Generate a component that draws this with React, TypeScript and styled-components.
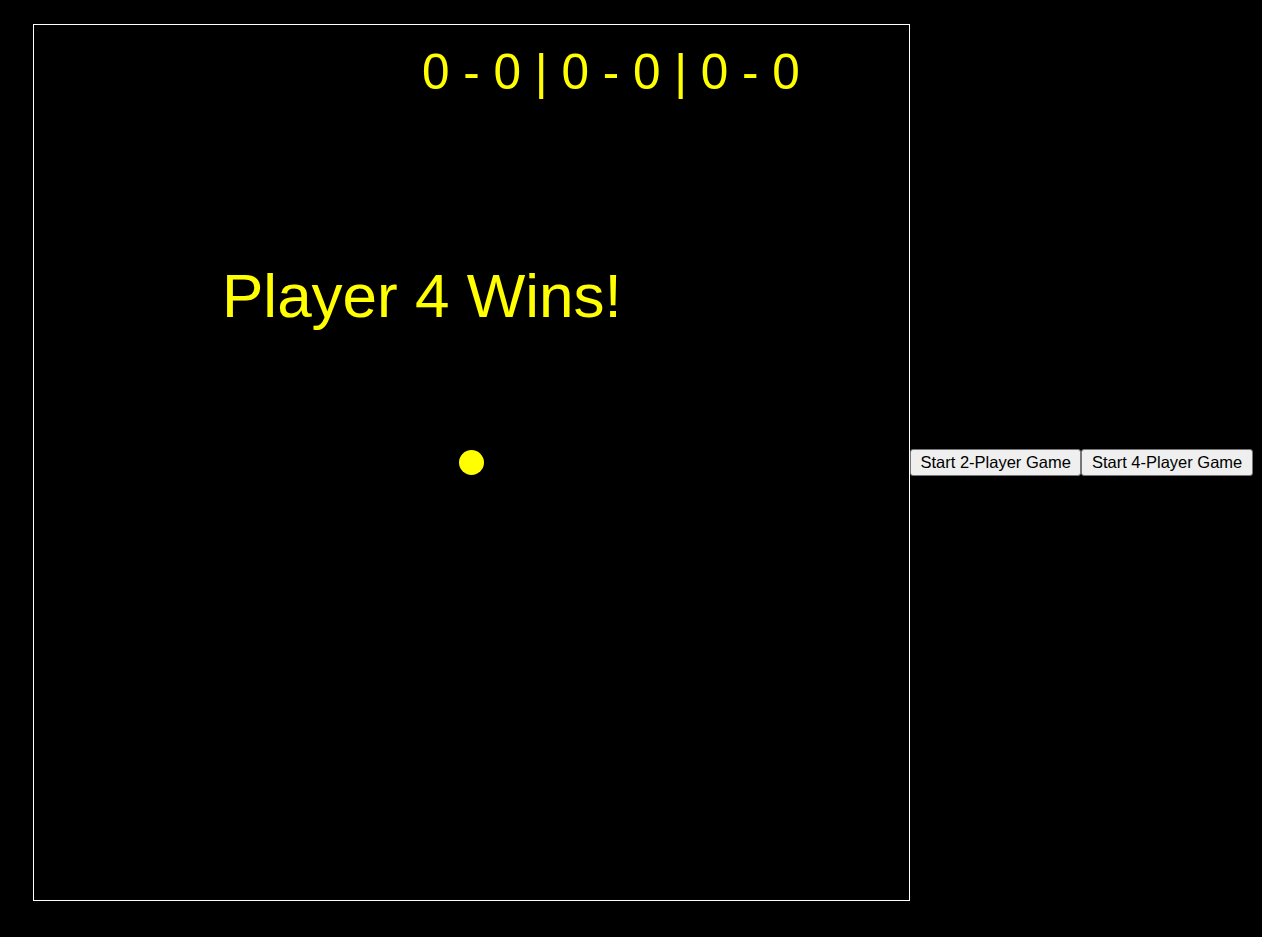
import React from "react";
import styled, { createGlobalStyle } from "styled-components";

const Global = createGlobalStyle`
  html, body {
    margin: 0;
    padding: 0;
    background: #000;
  }
  body {
    font-family: "Liberation Sans", Arial, sans-serif;
  }
`;

const Page = styled.div`
  display: flex;
  align-items: center;
  padding: 24px 0 0 33px;
`;

const Board = styled.div`
  position: relative;
  width: 875px;
  height: 875px;
  border: 1px solid #ffffff;
  background: #000;
  flex: none;
  overflow: hidden;
`;

const BoardText = styled.div<{ $size: number; $left: number; $top: number }>`
  position: absolute;
  left: ${(p) => p.$left}px;
  top: ${(p) => p.$top}px;
  font-family: "Liberation Sans", Arial, sans-serif;
  font-size: ${(p) => p.$size}px;
  line-height: 1;
  color: #ffff00;
  white-space: pre;
`;

const Ball = styled.div`
  position: absolute;
  left: 425px;
  top: 425px;
  width: 25px;
  height: 25px;
  border-radius: 50%;
  background: #ffff00;
`;

const Controls = styled.div`
  display: flex;
`;

const Button = styled.button`
  height: 27px;
  padding: 0 9.5px;
  margin: 0;
  background: #efefef;
  color: #000;
  border: 1px solid #767676;
  border-radius: 3px;
  font-family: "Liberation Sans", Arial, sans-serif;
  font-size: 16.5px;
  line-height: 1;
  cursor: pointer;
`;

export default function App() {
  return (
    <>
      <Global />
      <Page>
        <Board>
          <BoardText $size={49.5} $left={388} $top={22}>
            0 - 0 | 0 - 0 | 0 - 0
          </BoardText>
          <BoardText $size={62} $left={188} $top={240}>
            Player 4 Wins!
          </BoardText>
          <Ball />
        </Board>
        <Controls>
          <Button>Start 2-Player Game</Button>
          <Button>Start 4-Player Game</Button>
        </Controls>
      </Page>
    </>
  );
}
